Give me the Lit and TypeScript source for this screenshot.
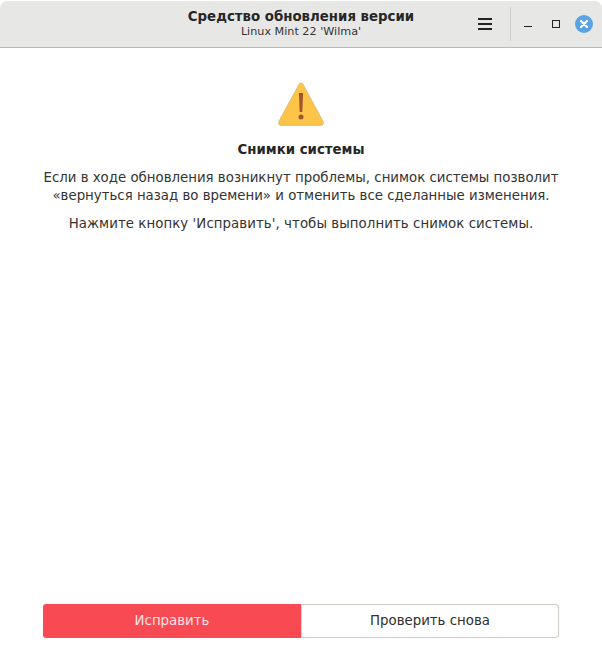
import { LitElement, html, css } from "lit";
import { customElement } from "lit/decorators.js";

@customElement("app-root")
export class AppRoot extends LitElement {
  static styles = css`
    :host {
      display: flex;
      flex-direction: column;
      width: 602px;
      height: 651px;
      background: #ffffff;
      font-family: "DejaVu Sans", sans-serif;
      color: #2f2f2f;
      overflow: hidden;
    }
    .titlebar {
      flex: none;
      box-sizing: border-box;
      height: 47px;
      margin-top: 1px;
      background: #e7e8e6;
      border-bottom: 1px solid #b9b9b7;
      border-radius: 7px 7px 0 0;
      display: grid;
      grid-template-columns: 1fr auto 1fr;
      align-items: center;
    }
    .titles {
      grid-column: 2;
      display: flex;
      flex-direction: column;
      align-items: center;
      padding-bottom: 1px;
    }
    .title {
      font-size: 13.33px;
      line-height: 17px;
      font-weight: 700;
      color: #262626;
    }
    .subtitle {
      font-size: 11.2px;
      line-height: 14px;
      color: #333;
    }
    .controls {
      grid-column: 3;
      display: flex;
      align-items: center;
      justify-content: flex-end;
      padding-right: 9px;
    }
    .menu {
      display: block;
      margin-right: 18px;
    }
    .sep {
      width: 1px;
      height: 34px;
      background: #cfd0ce;
      margin-right: 13px;
    }
    .min {
      display: block;
      margin-right: 20px;
    }
    .max {
      display: block;
      margin-right: 15px;
    }
    .close {
      display: block;
    }
    .content {
      flex: 1;
      display: flex;
      flex-direction: column;
      align-items: center;
      padding: 33px 43px 13px;
      min-height: 0;
    }
    .warn {
      display: block;
      margin-bottom: 12px;
    }
    h1 {
      margin: 0 0 10px;
      font-size: 13.33px;
      line-height: 18px;
      font-weight: 700;
      color: #262626;
    }
    p {
      margin: 0;
      font-size: 13.33px;
      line-height: 18px;
      text-align: center;
      color: #333;
    }
    p + p {
      margin-top: 10px;
      letter-spacing: 0.07px;
    }
    .spacer {
      flex: 1;
    }
    .buttons {
      align-self: stretch;
      display: grid;
      grid-template-columns: 1fr 1fr;
      height: 34px;
    }
    .btn {
      display: flex;
      align-items: center;
      justify-content: center;
      box-sizing: border-box;
      font: inherit;
      font-size: 13.33px;
      padding: 0 0 1px;
    }
    .fix {
      background: #f74a52;
      color: #fde3e5;
      border: none;
      border-radius: 3px 0 0 3px;
    }
    .again {
      background: #fff;
      color: #2f2f2f;
      border: 1px solid #cdccc6;
      border-left-color: #d8d7d2;
      border-radius: 0 4px 4px 0;
    }
  `;

  render() {
    return html`
      <header class="titlebar">
        <div class="titles">
          <div class="title">Средство обновления версии</div>
          <div class="subtitle">Linux Mint 22 'Wilma'</div>
        </div>
        <div class="controls">
          <svg class="menu" width="14" height="12" viewBox="0 0 14 12">
            <path d="M0 0h14v2H0zM0 5h14v2H0zM0 10h14v2H0z" fill="#232323" />
          </svg>
          <div class="sep"></div>
          <svg class="min" width="8" height="8" viewBox="0 0 8 8">
            <path d="M0 6h8v1H0z" fill="#232323" />
          </svg>
          <svg class="max" width="8" height="8" viewBox="0 0 8 8">
            <rect x="0.5" y="0.5" width="7" height="7" fill="none" stroke="#232323" />
          </svg>
          <svg class="close" width="18" height="18" viewBox="0 0 18 18">
            <circle cx="9" cy="9" r="9" fill="#5aa2e2" />
            <path d="M6 6l6 6M12 6l-6 6" stroke="#fff" stroke-width="2.2" stroke-linecap="round" />
          </svg>
        </div>
      </header>
      <main class="content">
        <svg class="warn" width="48" height="48" viewBox="0 0 48 48">
          <path
            d="M24 2c.9 0 1.600.5 2 1.200L46.200 40.500c.9 1.700-.1 3.900-2 3.900H3.800c-1.900 0-2.900-2.200-2-3.900L22 3.200c.4-.7 1.100-1.200 2-1.200z"
            fill="#fdc44a"
            stroke="#c9ad74"
            stroke-width="0.6"
          />
          <path d="M21.900 12h4.200l-.8 19h-2.600z" fill="#a0552a" />
          <circle cx="24" cy="36" r="2.500" fill="#a0552a" />
        </svg>
        <h1>Снимки системы</h1>
        <p>
          Если в ходе обновления возникнут проблемы, снимок системы позволит<br />«вернуться назад во
          времени» и отменить все сделанные изменения.
        </p>
        <p>Нажмите кнопку 'Исправить', чтобы выполнить снимок системы.</p>
        <div class="spacer"></div>
        <div class="buttons">
          <button class="btn fix">Исправить</button>
          <button class="btn again">Проверить снова</button>
        </div>
      </main>
    `;
  }
}
